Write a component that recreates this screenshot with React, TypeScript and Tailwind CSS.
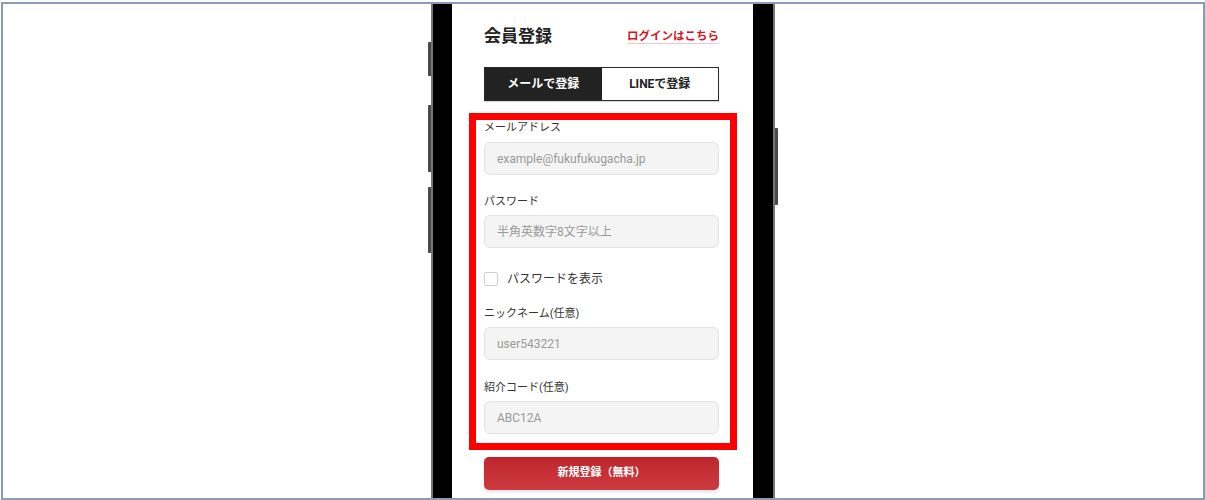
import React from "react";

const font = { fontFamily: 'Roboto, "Noto Sans CJK JP", "Noto Sans", sans-serif' };

function Field({ label, placeholder, top, gap }: { label: string; placeholder: string; top: string; gap: string }) {
  return (
    <div className={top}>
      <div className="h-[16px] overflow-visible text-[11px] leading-[16px] text-[#333] whitespace-nowrap">{label}</div>
      <div className={`${gap} h-[33px] w-full rounded-[6px] border border-[#e3e3e3] bg-[#f4f4f4] flex items-center pl-[12px] text-[12px] text-[#9a9a9a]`}>
        {placeholder}
      </div>
    </div>
  );
}

export default function App() {
  return (
    <div className="w-[1205px] h-[500px] bg-white pl-[1px] pt-[2px]" style={font}>
      <div className="w-[1204px] h-[498px] border-2 border-[#8a9cb3] overflow-hidden flex justify-center bg-white">
        <div className="relative h-full w-[344px]">
          {/* side buttons */}
          <div className="absolute left-[-3px] top-[38px] h-[34px] w-[3px] rounded-l-[1px] bg-[#4a4a4a]" />
          <div className="absolute left-[-3px] top-[101px] h-[67px] w-[3px] rounded-l-[1px] bg-[#4a4a4a]" />
          <div className="absolute left-[-3px] top-[183px] h-[66px] w-[3px] rounded-l-[1px] bg-[#4a4a4a]" />
          <div className="absolute right-[-3px] top-[124px] h-[77px] w-[3px] rounded-r-[1px] bg-[#4a4a4a]" />
          <div className="h-full w-full bg-black border-x-2 border-[#777] pl-[19px] pr-[20px]">
            <div className="relative h-full w-[301px] bg-white pl-[32px] pr-[34px] pt-[20px]">
              {/* header */}
              <div className="flex items-center justify-between h-[24px]">
                <div className="text-[17px] leading-[24px] font-bold text-[#222]">会員登録</div>
                <div className="text-[11.5px] leading-[16px] font-bold text-[#d3141c] underline decoration-[#f2c4c6] underline-offset-[3px]">
                  ログインはこちら
                </div>
              </div>
              {/* tabs */}
              <div className="mt-[19px] flex h-[34px] border border-[#2a2a2a] shadow-[0_1px_1px_rgba(0,0,0,0.15)]">
                <div className="flex-1 bg-[#222] text-white text-[12px] font-bold flex items-center justify-center">
                  メールで登録
                </div>
                <div className="flex-1 bg-white text-[#222] text-[12px] font-bold flex items-center justify-center">
                  LINEで登録
                </div>
              </div>
              {/* form */}
              <Field top="mt-[19px]" gap="mt-[6px]" label="メールアドレス" placeholder="example@fukufukugacha.jp" />
              <Field top="mt-[19px]" gap="mt-[5px]" label="パスワード" placeholder="半角英数字8文字以上" />
              <div className="mt-[21px] flex items-center h-[20px]">
                <div className="h-[14px] w-[14px] rounded-[2px] border border-[#cfcfcf] bg-white" />
                <div className="ml-[9px] text-[12px] leading-[20px] text-[#333]">パスワードを表示</div>
              </div>
              <Field top="mt-[17px]" gap="mt-[5px]" label="ニックネーム(任意)" placeholder="user543221" />
              <Field top="mt-[20px]" gap="mt-[5px]" label="紹介コード(任意)" placeholder="ABC12A" />
              <div className="mt-[23px] h-[33px] rounded-[5px] bg-gradient-to-b from-[#bf252c] to-[#cc3a40] shadow-[0_2px_3px_rgba(0,0,0,0.12)] flex items-center justify-center text-white text-[11px] font-bold">
                新規登録（無料）
              </div>
              {/* annotation */}
              <div className="absolute left-[17px] top-[109px] w-[268px] h-[337px] border-[7px] border-[#ff0000] pointer-events-none" />
            </div>
          </div>
        </div>
      </div>
    </div>
  );
}
